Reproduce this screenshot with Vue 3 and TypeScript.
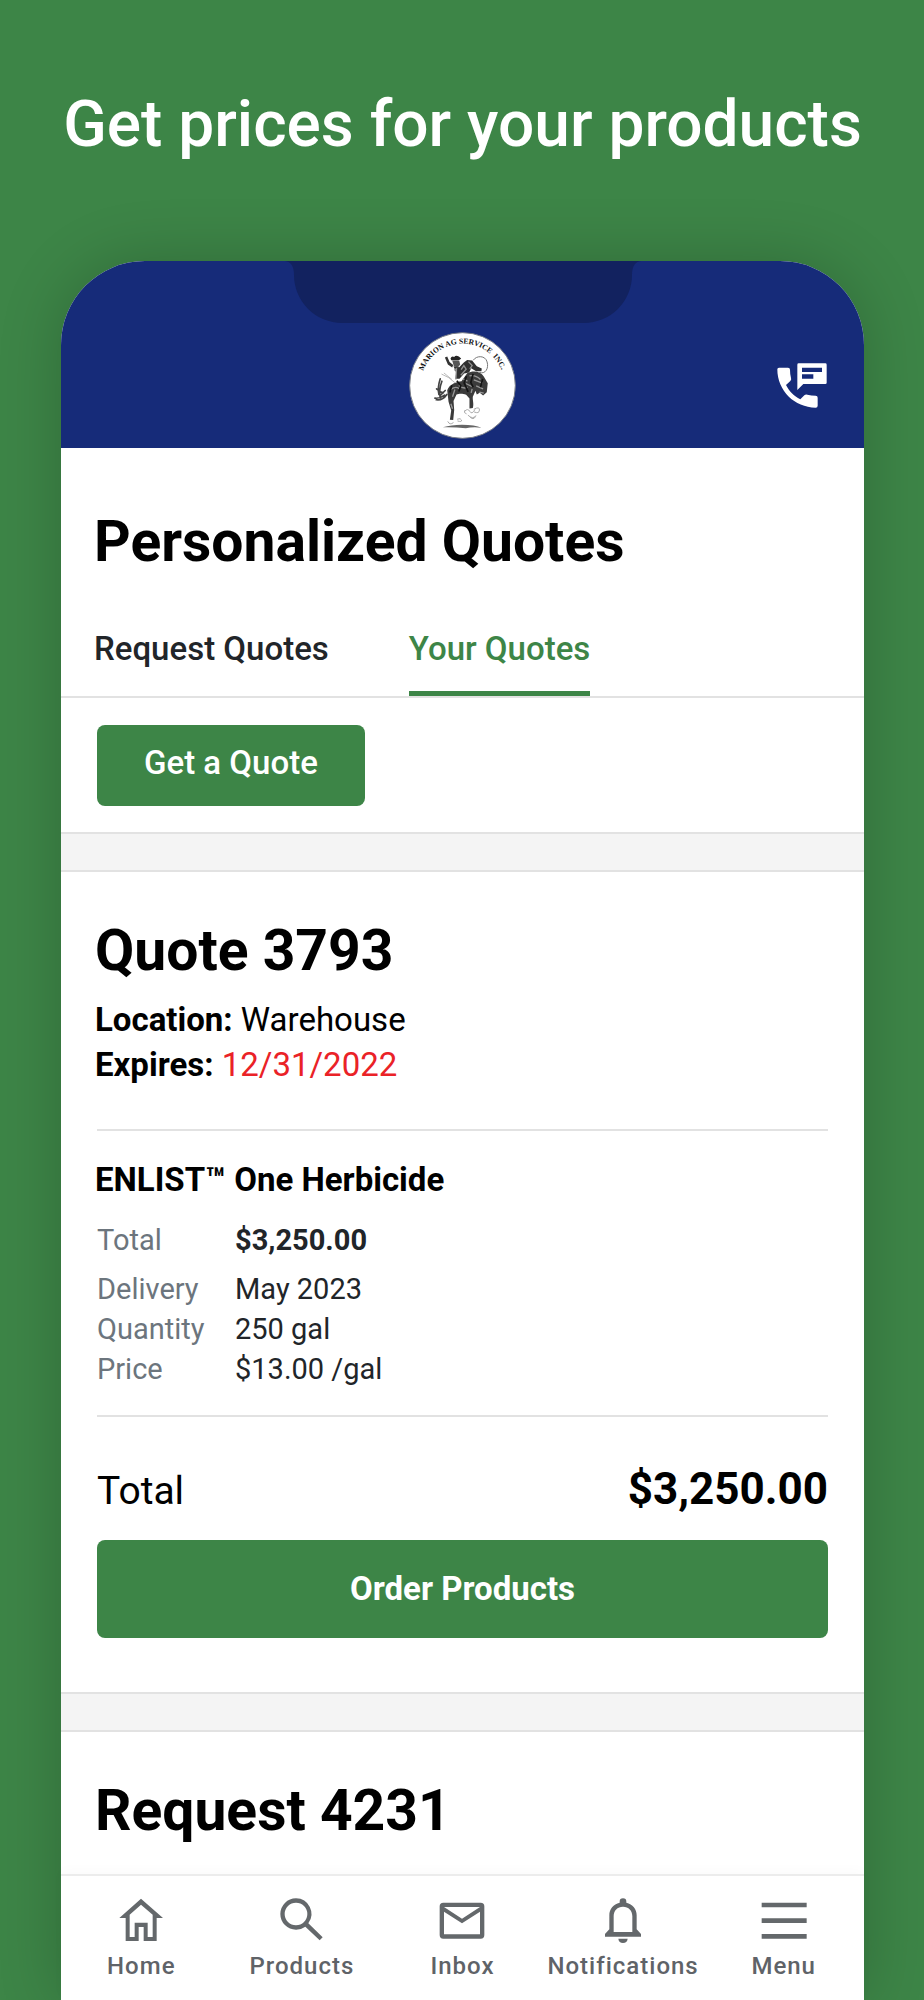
<script setup lang="ts">
import { ref } from 'vue'

interface Detail {
  label: string
  value: string
  strong?: boolean
}

interface NavItem {
  label: string
  viewBox: string
  path: string
}

const tabs: string[] = ['Request Quotes', 'Your Quotes']
const activeTab = ref<string>('Your Quotes')

const details: Detail[] = [
  { label: 'Total', value: '$3,250.00', strong: true },
  { label: 'Delivery', value: 'May 2023' },
  { label: 'Quantity', value: '250 gal' },
  { label: 'Price', value: '$13.00 /gal' },
]

const navItems: NavItem[] = [
  {
    label: 'Home',
    viewBox: '172 472 144 144',
    path: 'M244 477 310 535H291V604H252V562H237V604H198V535H179ZM244 495 210 525V592H225V549H264V592H279V525Z',
  },
  {
    label: 'Products',
    viewBox: '652 472 144 144',
    path: 'M706 476a47 47 0 1 0 0 94 47 47 0 0 0 28-9L777 602 786 593 743 551A47 47 0 0 0 706 476ZM706 489a34 34 0 1 1 0 68 34 34 0 0 1 0-68Z',
  },
  {
    label: 'Inbox',
    viewBox: '1136 472 144 144',
    path: 'M1152 489H1264Q1275 489 1275 500V586Q1275 597 1264 597H1152Q1141 597 1141 586V500Q1141 489 1152 489ZM1154 502 1208 537 1262 502ZM1154 516V584H1262V516L1208 551Z',
  },
  {
    label: 'Notifications',
    viewBox: '412 472 144 144',
    path: 'M474 486a10 10 0 0 1 20 0V489C513 493 525 508 525 527V569L538 583V591H430V583L443 569V527C443 508 455 493 474 489ZM484 501C467 501 456 513 456 530V577H512V530C512 513 501 501 484 501ZM470 597H498C497 606 492 610 484 610S471 606 470 597Z',
  },
  {
    label: 'Menu',
    viewBox: '894 472 144 144',
    path: 'M899 489H1034V503H899ZM899 536H1034V550H899ZM899 583H1034V597H899Z',
  },
]
</script>

<template>
  <div class="page">
    <h1 class="headline">Get prices for your products</h1>

    <main class="phone">
      <header class="topbar">
        <svg class="notch" viewBox="0 0 356 62" aria-hidden="true">
          <path d="M0 0H356Q347 1 347 14A48 48 0 0 1 299 62H57A48 48 0 0 1 9 14Q9 1 0 0Z" />
        </svg>
        <svg class="logo" viewBox="57 36 322 322" role="img" aria-label="Marion Ag Service Inc.">
          <defs>
            <path id="logo-arc" d="M92 197A126 126 0 0 1 344 197" />
          </defs>
          <circle cx="218" cy="197" r="159" fill="#fff" stroke="#777b86" stroke-width="3" />
          <text class="logo-text">
            <textPath href="#logo-arc" startOffset="44">MARION AG SERVICE&#160; INC.</textPath>
          </text>
          <g fill="none" stroke-linecap="round" stroke-linejoin="round">
            <path d="M251 120C260 106 287 106 292 126 298 146 286 164 270 158" stroke="#777" stroke-width="3" />
            <path d="M156 163Q176 170 196 189M163 160 185 178" stroke="#999" stroke-width="2" />
            <path d="M151 177Q142 205 147 224M156 184Q146 210 151 235M140 207Q149 216 160 219M135 235Q150 237 164 226M139 240Q158 243 171 224M152 226 166 212" stroke="#444" stroke-width="5" />
            <path d="M225 274q9-10 15 1t15-5M235 287q15 14 23 1M229 282q-8-2-5-9M253 268q17-9 16 3t-15 6M241 292q9 11 16-1M174 306q6 12 16 3M203 298q10-4 12 3t-11 3" stroke="#aaa" stroke-width="3" />
          </g>
          <path d="M182 116Q185 107 193 111 198 104 207 110L214 116Q210 122 202 121L184 121Z" fill="#252525" />
          <path d="M187 122H208L211 134 204 143 192 139Z" fill="#565656" />
          <path d="M165 113 172 110 179 126 190 135 187 143 174 134Z" fill="#333" />
          <path d="M191 139 208 142 222 128 232 120 247 122 261 139 276 146 275 154 259 154 244 145 238 158 223 161 209 177H197L199 158Z" fill="#303030" />
          <path d="M193 151 200 146 198 179M214 149 222 137 229 148 213 166M236 125 247 137 240 147" fill="none" stroke="#909090" stroke-width="4" />
          <path d="M172 211C180 191 200 186 215 184L232 160C249 151 272 153 282 170L294 190 291 217 280 227 270 219 261 224 257 213 249 231C248 242 253 252 249 265L239 266 239 236 229 225C215 219 207 222 200 224L191 244 193 271 190 301 180 300 184 272 176 246Z" fill="#3b3b3b" />
          <path d="M181 211Q194 197 208 206M188 231 195 209M207 197Q221 209 233 202M228 191 246 200M239 168Q257 164 272 179M252 180 278 190M259 198 280 207M269 217 282 220M219 177 233 184M183 252 188 267M244 219 247 207" fill="none" stroke="#979797" stroke-width="4" />
          <path d="M201 183 213 198 207 215M230 169 223 189 235 216M250 162 243 188 250 202M279 177 272 202M186 196 180 218" fill="none" stroke="#141414" stroke-width="5" />
          <path d="M159 323Q184 315 216 315 256 315 275 324 247 321 228 326 195 322 159 323Z" fill="#666" />
        </svg>
        <button class="contact" type="button" aria-label="Contact us">
          <svg viewBox="48 36 156 141" aria-hidden="true">
            <path d="M57 53H84Q90 53 90 59C90 68 91 76 93 84Q95 89 91 93L78 105C88 124 101 138 121 148L133 136Q137 132 142 134C150 136 158 137 167 137Q173 137 173 143V167Q173 173 167 173C104 173 52 122 52 58Q52 53 57 53Z" />
            <path fill-rule="evenodd" d="M116 40H196Q200 40 200 44V98Q200 102 196 102H130L112 120V44Q112 40 116 40ZM126 53V66H186V53ZM126 73V86H160V73Z" />
          </svg>
        </button>
      </header>

      <section class="intro">
        <h2 class="title">Personalized Quotes</h2>
        <div class="tabs" role="tablist">
          <button
            v-for="tab in tabs"
            :key="tab"
            type="button"
            role="tab"
            class="tab"
            :class="{ active: tab === activeTab }"
            :aria-selected="tab === activeTab"
            @click="activeTab = tab"
          >
            {{ tab }}
          </button>
        </div>
        <div class="action">
          <button class="btn btn-small" type="button">Get a Quote</button>
        </div>
      </section>

      <div class="separator"></div>

      <section class="quote">
        <h2 class="title">Quote 3793</h2>
        <p class="meta"><b>Location:</b> Warehouse</p>
        <p class="meta"><b>Expires:</b> <span class="expired">12/31/2022</span></p>

        <div class="product">
          <h3 class="product-name">ENLIST™ One Herbicide</h3>
          <dl class="details">
            <div v-for="d in details" :key="d.label" class="detail" :class="{ strong: d.strong }">
              <dt>{{ d.label }}</dt>
              <dd>{{ d.value }}</dd>
            </div>
          </dl>
        </div>

        <div class="sum">
          <span>Total</span>
          <strong>$3,250.00</strong>
        </div>
        <button class="btn btn-wide" type="button">Order Products</button>
      </section>

      <div class="separator"></div>

      <section class="request">
        <h2 class="title">Request 4231</h2>
      </section>

      <nav class="bottom-nav">
        <a v-for="item in navItems" :key="item.label" href="#" class="nav-item">
          <svg :viewBox="item.viewBox" aria-hidden="true">
            <path fill-rule="evenodd" :d="item.path" />
          </svg>
          <span>{{ item.label }}</span>
        </a>
      </nav>
    </main>
  </div>
</template>

<style>
body {
  margin: 0;
  background: #3d8547;
}
</style>

<style scoped>
.page {
  box-sizing: border-box;
  display: flex;
  flex-direction: column;
  min-height: 100vh;
  padding: 87px 60px 0 61px;
  overflow: hidden;
  background: #3d8547;
  color: #000;
  font-family: Roboto, "Liberation Sans", sans-serif;
}

h1, h2, h3, p, dl, dd {
  margin: 0;
}

button {
  padding: 0;
  border: 0;
  background: none;
  font-family: inherit;
  cursor: pointer;
}

.headline {
  margin-bottom: 98px;
  color: #fff;
  font-size: 64px;
  font-weight: 500;
  line-height: 76px;
  text-align: center;
  white-space: nowrap;
}

.phone {
  display: flex;
  flex: 1;
  flex-direction: column;
  border-radius: 84px 84px 0 0;
  background: #fff;
  box-shadow: 0 0 64px rgba(0, 0, 0, 0.2);
}

.topbar {
  position: relative;
  display: flex;
  align-items: flex-end;
  justify-content: center;
  box-sizing: border-box;
  height: 187px;
  padding-bottom: 9px;
  border-radius: 84px 84px 0 0;
  background: #162b79;
}

.notch {
  position: absolute;
  top: 0;
  left: 50%;
  width: 356px;
  height: 62px;
  margin-left: -178px;
  fill: #12225f;
}

.logo {
  width: 107px;
  height: 107px;
}

.logo-text {
  fill: #111;
  font-family: "Liberation Serif", serif;
  font-size: 23px;
  font-weight: 700;
}

.contact {
  position: absolute;
  right: 36px;
  bottom: 39px;
  width: 52px;
  height: 47px;
}

.contact svg {
  display: block;
  width: 52px;
  height: 47px;
  fill: #fff;
}

.title {
  font-size: 57px;
  font-weight: 700;
  line-height: 68px;
}

.intro {
  padding-top: 60px;
}

.intro .title {
  padding: 0 33px;
}

.tabs {
  display: flex;
  gap: 80px;
  margin-top: 53px;
  padding: 0 33px;
  border-bottom: 2px solid #e2e2e2;
}

.tab {
  padding-bottom: 22px;
  border-bottom: 5px solid transparent;
  color: #212529;
  font-size: 33px;
  font-weight: 500;
  line-height: 40px;
}

.tab.active {
  border-bottom-color: #3d8547;
  color: #3d8547;
}

.action {
  padding: 27px 36px 26px;
}

.btn {
  display: block;
  border-radius: 8px;
  background: #3d8547;
  color: #fff;
  font-size: 33px;
  line-height: 40px;
}

.btn-small {
  padding: 18px 47px 23px;
  font-weight: 500;
}

.btn-wide {
  width: 100%;
  padding: 29px 0;
  font-weight: 700;
}

.separator {
  height: 36px;
  border: solid #e2e2e2;
  border-width: 2px 0;
  background: #f4f4f4;
}

.quote {
  padding: 45px 36px 54px;
}

.quote .title,
.quote .meta,
.product-name {
  margin-left: -2px;
}

.quote .title {
  margin-bottom: 12px;
}

.meta {
  font-size: 33px;
  line-height: 45px;
}

.expired {
  color: #ea2227;
}

.product {
  margin-top: 42px;
  padding: 29px 0 26px;
  border: solid #e2e2e2;
  border-width: 2px 0;
}

.product-name {
  margin-bottom: 20px;
  font-size: 33px;
  font-weight: 700;
  line-height: 40px;
}

.detail {
  display: grid;
  grid-template-columns: 138px 1fr;
  color: #212529;
  font-size: 29px;
  line-height: 40px;
}

.detail dt {
  color: #6c757d;
}

.detail.strong {
  margin-bottom: 9px;
}

.detail.strong dd {
  font-weight: 700;
}

.sum {
  display: flex;
  align-items: baseline;
  justify-content: space-between;
  margin: 48px 0 25px;
  font-size: 39px;
  line-height: 48px;
}

.sum strong {
  font-size: 44px;
  font-weight: 700;
}

.request {
  flex: 1;
  padding: 45px 34px 29px;
}

.bottom-nav {
  display: grid;
  grid-template-columns: repeat(5, 1fr);
  padding: 21px 0 18px;
  border-top: 2px solid #ececec;
  background: #fff;
  box-shadow: 0 -4px 12px rgba(0, 0, 0, 0.02);
}

.nav-item {
  display: flex;
  flex-direction: column;
  align-items: center;
  gap: 5px;
  color: #5f6368;
  font-size: 24px;
  font-weight: 500;
  line-height: 32px;
  letter-spacing: 1px;
  text-decoration: none;
}

.nav-item svg {
  width: 48px;
  height: 48px;
  fill: #64686b;
}
</style>
